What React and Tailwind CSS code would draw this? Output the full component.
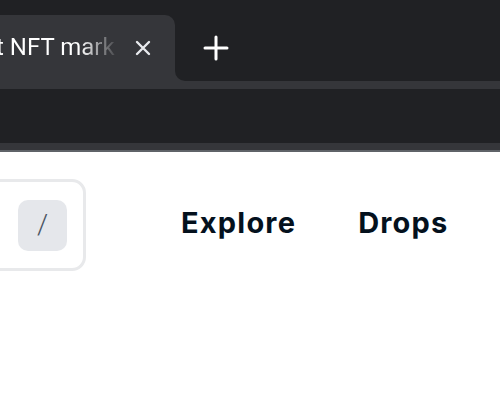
import React from 'react';

export default function App() {
    return (
        <div className="w-[500px] h-[403px] overflow-hidden bg-white" style={{ fontFamily: 'Roboto, "Noto Sans", sans-serif' }}>
            {/* tab strip */}
            <div className="h-[81px] bg-[#202124] flex flex-col">
                <div className="h-[15px]" />
                <div className="flex-1 flex">
                    <div className="bg-[#202124]">
                        <div className="w-[175px] h-full bg-[#35363a] rounded-tr-[10px] flex items-center">
                            <div className="w-[120px] overflow-hidden whitespace-nowrap">
                                <span className="inline-block -ml-[4px] w-[124px] text-[24px] leading-none bg-gradient-to-r from-white from-[68%] to-[#35363a] to-100% bg-clip-text text-transparent">
                                    t NFT mark
                                </span>
                            </div>
                            <svg width="18" height="18" viewBox="0 0 18 18" className="ml-[14px]">
                                <path d="M3 3 L15 15 M15 3 L3 15" stroke="#e8eaed" strokeWidth="2.4" strokeLinecap="round" />
                            </svg>
                        </div>
                    </div>
                    <div className="flex-1 bg-[#35363a]">
                        <div className="h-full bg-[#202124] rounded-bl-[10px] flex items-center">
                            <svg width="26" height="26" viewBox="0 0 26 26" className="ml-[28px]">
                                <path d="M13 2 V24 M2 13 H24" stroke="#ffffff" strokeWidth="3" strokeLinecap="round" />
                            </svg>
                        </div>
                    </div>
                </div>
            </div>

            {/* toolbar */}
            <div className="h-[8px] bg-[#35363a]" />
            <div className="h-[54px] bg-[#202124]" />
            <div className="h-[7px] bg-[#35363a]" />
            <div className="h-[2px] bg-[#5f6368]" />

            {/* page header */}
            <div className="flex items-center pt-[27px]">
                <div className="-ml-[100px] w-[186px] h-[92px] border-[3px] border-[#e8e9eb] rounded-[14px] flex items-center justify-end pr-[16px]">
                    <div className="w-[49px] h-[51px] bg-[#e5e7eb] rounded-[10px] flex items-center justify-center text-[28px] leading-none font-light text-[#4b5563]">
                        /
                    </div>
                </div>
                <nav className="flex items-center ml-[95px] gap-[62px] text-[29px] leading-none font-bold text-[#04111d] tracking-[1.2px] -mt-[6px]" style={{ fontFamily: 'Inter, "Noto Sans", sans-serif' }}>
                    <span>Explore</span>
                    <span>Drops</span>
                </nav>
            </div>
        </div>
    );
}
